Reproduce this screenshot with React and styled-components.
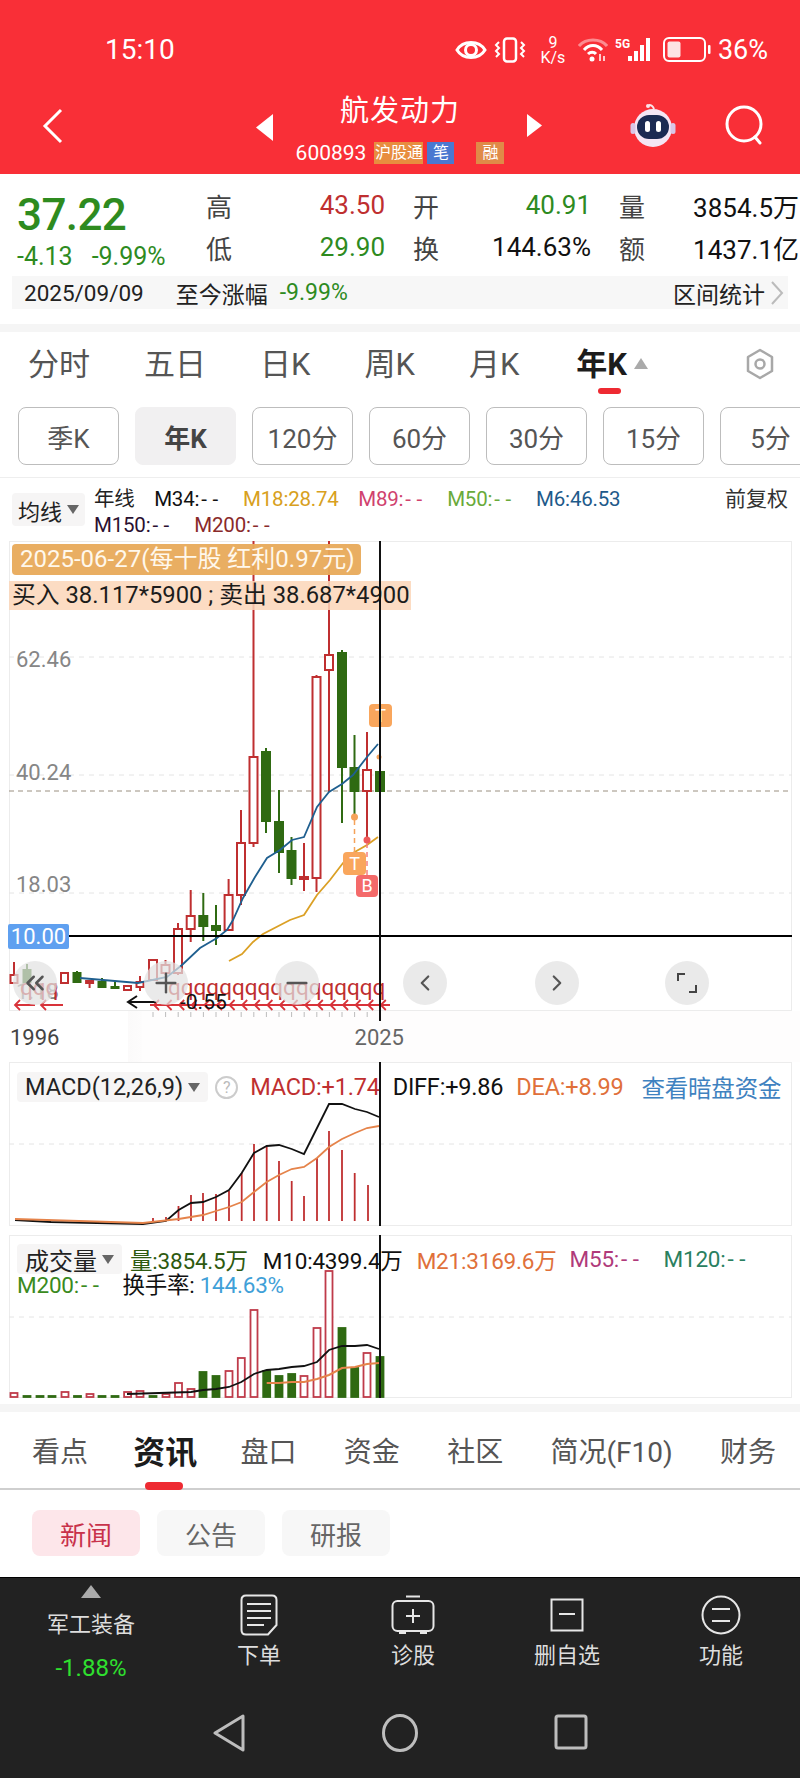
import React from 'react';
import styled, { createGlobalStyle } from 'styled-components';
import { ChevronLeft, ChevronRight, ChevronsLeft, Plus, Minus } from 'lucide-react';

const FONT = `Roboto, "Noto Sans CJK SC", sans-serif`;
const RED = '#bf2f30';
const GREEN = '#2f6a12';

const GlobalStyle = createGlobalStyle`
  html, body { margin: 0; padding: 0; background: #fff; }
  body { font-family: ${FONT}; color: #111; }
  * { box-sizing: border-box; }
`;

const Page = styled.div`
  width: 800px;
  height: 1778px;
  overflow: hidden;
  background: #fff;
`;

/* ---------- red header ---------- */
const Header = styled.header`
  height: 174px;
  background: #f92f37;
  color: #fff;
`;
const StatusBar = styled.div`
  height: 95px;
  padding: 4px 32px 0 105px;
  display: flex;
  align-items: center;
  font-size: 28px;
`;
const StatusIcons = styled.div`
  margin-left: auto;
  display: flex;
  align-items: center;
  gap: ${p => p.$gap || 0}px;
`;
const Speed = styled.div`
  width: 30px;
  margin: 0 10px 0 12px;
  font-size: 16px;
  line-height: 15px;
  text-align: center;
`;
const BatteryPct = styled.span`
  font-size: 27px;
  margin-left: 7px;
`;
const NavRow = styled.div`
  display: grid;
  grid-template-columns: 256px 17px 1fr 15px 258px;
  align-items: start;
`;
const BackCell = styled.div`
  padding: 13px 0 0 42px;
`;
const ArrowCell = styled.div`
  padding-top: 19px;
  display: flex;
`;
const TitleCell = styled.div`
  display: flex;
  flex-direction: column;
  align-items: center;
`;
const Title = styled.div`
  font-size: 29px;
  line-height: 32px;
  letter-spacing: 1px;
`;
const CodeRow = styled.div`
  margin-top: 14px;
  display: flex;
  align-items: center;
  font-size: 21px;
  line-height: 24px;
`;
const Badge = styled.span`
  height: 22px;
  width: ${p => p.$w}px;
  margin-left: ${p => p.$gap}px;
  background: ${p => p.$bg};
  color: #fff;
  font-size: 16px;
  line-height: 22px;
  text-align: center;
  white-space: nowrap;
`;
const RightCell = styled.div`
  padding: 8px 0 0 88px;
  display: flex;
  gap: 49px;
  align-items: center;
`;

/* ---------- quote ---------- */
const Quote = styled.section`
  height: 150px;
  padding-top: 12px;
`;
const QuoteTop = styled.div`
  display: flex;
  height: 84px;
`;
const PriceCol = styled.div`
  width: 206px;
  padding: 3px 0 0 17px;
`;
const Price = styled.div`
  font-size: 44px;
  line-height: 52px;
  font-weight: 500;
  color: #2e8b1f;
  letter-spacing: -0.6px;
`;
const Change = styled.div`
  font-size: 25px;
  line-height: 32px;
  color: #2e8b1f;
  display: flex;
  gap: 19px;
`;
const StatGrid = styled.div`
  display: grid;
  grid-template-columns: 179px 178px 180px;
  grid-auto-rows: 42px;
  column-gap: 28px;
  margin-top: -2px;
`;
const Stat = styled.div`
  display: flex;
  justify-content: space-between;
  align-items: center;
  font-size: 26px;
  span:first-child { color: #444; }
  span:last-child { color: ${p => p.$c || '#111'}; }
`;
const RangeBar = styled.div`
  margin: 6px 12px 0;
  height: 33px;
  padding: 0 4px 0 12px;
  background: #f7f7f7;
  display: flex;
  align-items: center;
  font-size: 23px;
  color: #222;
`;
const RangeDate = styled.span`
  font-size: 22.5px;
`;
const RangeLabel = styled.span`
  margin-left: 32px;
`;
const RangePct = styled.span`
  margin-left: 12px;
  color: #2e8b1f;
`;
const RangeLink = styled.span`
  margin-left: auto;
  display: flex;
  align-items: center;
  gap: 5px;
`;
const Sep = styled.div`
  height: ${p => p.$h || 8}px;
  background: ${p => p.$c || '#f5f5f5'};
`;

/* ---------- period tabs ---------- */
const PeriodTabs = styled.nav`
  display: flex;
  gap: 54px;
  padding: 13px 24px 0 28px;
  height: 53px;
  align-items: flex-start;
  position: relative;
`;
const PeriodTab = styled.span`
  position: relative;
  font-size: 31px;
  line-height: 40px;
  margin-left: ${p => (p.$active ? 3 : 0)}px;
  color: ${p => (p.$active ? '#1c1c1c' : '#555')};
  font-weight: ${p => (p.$active ? 700 : 400)};
`;
const SortMark = styled.span`
  position: absolute;
  left: 58px;
  top: 13px;
  width: 0;
  height: 0;
  border-left: 7px solid transparent;
  border-right: 7px solid transparent;
  border-bottom: 11px solid #aaa;
`;
const Underline = styled.span`
  position: absolute;
  left: ${p => p.$left}px;
  top: ${p => p.$top}px;
  width: ${p => p.$w}px;
  height: ${p => p.$h}px;
  border-radius: 4px;
  background: #ee2a32;
`;
const SettingsSlot = styled.span`
  position: absolute;
  right: 24px;
  top: 16px;
`;
const Pills = styled.div`
  margin-top: 22px;
  padding-left: 18px;
  display: flex;
  gap: 16px;
  height: 71px;
  overflow: hidden;
  border-bottom: 1px solid #eee;
`;
const Pill = styled.div`
  flex: 0 0 101px;
  height: 58px;
  border-radius: 8px;
  border: 1px solid ${p => (p.$active ? '#f1f0f1' : '#bdbdbd')};
  background: ${p => (p.$active ? '#f1f0f1' : '#fff')};
  color: ${p => (p.$active ? '#444' : '#555')};
  font-weight: ${p => (p.$active ? 700 : 400)};
  font-size: 26px;
  display: flex;
  align-items: center;
  justify-content: center;
`;

/* ---------- main chart ---------- */
const Legend = styled.div`
  height: 63px;
  padding: 8px 12px 0 12px;
  display: flex;
  align-items: flex-start;
  font-size: 20.5px;
`;
const Chip = styled.div`
  flex: none;
  height: ${p => p.$h}px;
  margin-top: ${p => p.$top || 0}px;
  padding: 0 ${p => p.$pad || 8}px;
  border-radius: 4px;
  background: #f6f5f5;
  display: flex;
  align-items: center;
  gap: 5px;
  color: #222;
  font-size: ${p => p.$fs}px;
`;
const Caret = styled.span`
  width: 0;
  height: 0;
  border-left: 6px solid transparent;
  border-right: 6px solid transparent;
  border-top: 9px solid #666;
`;
const LegendRows = styled.div`
  margin-left: 9px;
  flex: 1;
`;
const LegendRow = styled.div`
  display: flex;
  gap: 19.5px;
  line-height: 26px;
`;
const Tint = styled.span`
  color: ${p => p.$c};
  white-space: nowrap;
  letter-spacing: -0.2px;
`;
const Dashes = styled.span`
  letter-spacing: 5.5px;
  margin-left: 2px;
`;
const LegendEnd = styled.span`
  margin-left: auto;
  color: #333;
  font-size: 21px;
`;
const Frame = styled.div`
  position: relative;
  margin: 0 8px 0 9px;
  height: ${p => p.$h}px;
  border: 1px solid #ececec;
`;
const Plot = styled.svg`
  position: absolute;
  left: -10px;
  top: -1px;
  overflow: visible;
`;
const Crosshair = styled.div`
  position: absolute;
  left: 369px;
  top: -1px;
  width: 2px;
  height: ${p => p.$h}px;
  background: #111;
  z-index: 3;
`;
const Tag = styled.div`
  position: absolute;
  left: ${p => p.$x - 10}px;
  top: ${p => p.$y - 542}px;
  white-space: nowrap;
  z-index: ${p => p.$z || 1};
`;
const GoldBanner = styled(Tag)`
  width: 349px;
  height: 31px;
  border-radius: 4px;
  background: rgba(232, 170, 90, 0.95);
  color: #fff8ec;
  font-size: 24px;
  line-height: 31px;
  padding-left: 8px;
`;
const TradeBanner = styled(Tag)`
  width: 402px;
  height: 29px;
  background: rgba(251, 214, 184, 0.85);
  color: #1c1c1c;
  font-size: 23.8px;
  line-height: 29px;
  padding-left: 3px;
`;
const PriceLabel = styled(Tag)`
  color: #868686;
  font-size: 22px;
  line-height: 26px;
`;
const CurrentBox = styled(Tag)`
  width: 61px;
  height: 25px;
  border-radius: 2px;
  background: #5fa0f0;
  color: #fff;
  font-size: 22px;
  line-height: 25px;
  text-align: center;
`;
const GlitchText = styled(Tag)`
  color: ${RED};
  font-size: 22.5px;
  line-height: 26px;
`;
const PlainText = styled(Tag)`
  color: #111;
  font-size: 21px;
  line-height: 26px;
`;
const MarkerBox = styled(Tag)`
  width: ${p => p.$w}px;
  height: ${p => p.$w}px;
  border-radius: 4px;
  background: ${p => p.$bg};
  color: #fff;
  font-size: 18px;
  line-height: ${p => p.$w}px;
  text-align: center;
`;
const RoundBtn = styled(Tag)`
  width: 44px;
  height: 44px;
  border-radius: 50%;
  background: rgba(226, 226, 226, 0.72);
  color: #555;
  display: flex;
  align-items: center;
  justify-content: center;
`;
const AxisRow = styled.div`
  height: 51px;
  padding: 13px 396px 0 10px;
  display: flex;
  justify-content: space-between;
  font-size: 22px;
  line-height: 28px;
  color: #444;
  background: linear-gradient(90deg, #fff 128px, #fbfafa 128px, #fdfcfc 142px, #fefdfd 142px);
  span:last-child { color: #666; }
`;

/* ---------- macd + volume ---------- */
const PanelHead = styled.div`
  position: relative;
  z-index: 1;
  display: flex;
  align-items: center;
  font-size: 23.5px;
  padding: 7px 0 0 7px;
`;
const HelpMark = styled.span`
  width: 23px;
  height: 23px;
  margin-left: 7px;
  border-radius: 50%;
  border: 2px solid #ccc;
  color: #bbb;
  font-size: 16px;
  line-height: 19px;
  text-align: center;
`;
const HeadText = styled(Tint)`
  margin-left: ${p => p.$gap}px;
`;
const VolumeHead = styled.div`
  position: relative;
  z-index: 1;
  display: flex;
  flex-wrap: wrap;
  align-items: center;
  font-size: 22.5px;
  padding: 7px 0 0 7px;
`;
const Break = styled.div`
  flex-basis: 100%;
  height: 0;
`;
const SecondLine = styled.div`
  display: flex;
  line-height: 24px;
  margin-top: -2px;
`;
const PanelGap = styled.div`
  height: 9px;
`;

/* ---------- info tabs ---------- */
const InfoTabs = styled.nav`
  position: relative;
  height: 78px;
  padding: 0 24px 0 32px;
  display: flex;
  align-items: center;
  justify-content: space-between;
  border-bottom: 2px solid #cfcfcf;
`;
const InfoTab = styled.span`
  font-weight: ${p => (p.$active ? 700 : 400)};
  font-size: ${p => (p.$active ? 32 : 28)}px;
  color: ${p => (p.$active ? '#1c1c1c' : '#555')};
  margin: ${p => (p.$active ? '0 -4px 0 -2px' : 0)};
`;
const SubTabs = styled.div`
  height: 87px;
  padding: 20px 0 0 32px;
  display: flex;
  gap: 17px;
`;
const SubTab = styled.div`
  width: 108px;
  height: 46px;
  border-radius: 8px;
  background: ${p => (p.$active ? '#fde6ea' : '#f7f7f7')};
  color: ${p => (p.$active ? '#c8324a' : '#666')};
  font-size: 26px;
  display: flex;
  align-items: center;
  justify-content: center;
`;

/* ---------- dark footer ---------- */
const Footer = styled.footer`
  height: 201px;
  background: #222;
  border-top: 1px solid #000;
  color: #ddd;
`;
const Actions = styled.div`
  display: grid;
  grid-template-columns: 182px repeat(4, 154px);
  height: 124px;
`;
const SectorCell = styled.div`
  padding-top: 7px;
  display: flex;
  flex-direction: column;
  align-items: center;
`;
const UpMark = styled.span`
  width: 0;
  height: 0;
  border-left: 10px solid transparent;
  border-right: 10px solid transparent;
  border-bottom: 13px solid #aaa;
`;
const FooterLabel = styled.div`
  font-size: 22px;
  line-height: 28px;
  margin-top: ${p => p.$top}px;
`;
const SectorPct = styled.div`
  font-size: 24px;
  line-height: 28px;
  margin-top: 15px;
  color: #2fe02f;
`;
const ActionCell = styled.div`
  padding-top: 16px;
  display: flex;
  flex-direction: column;
  align-items: center;
`;
const IconSlot = styled.div`
  height: 42px;
  display: flex;
  align-items: center;
`;
const SystemNav = styled.div`
  display: grid;
  grid-template-columns: repeat(3, 171px);
  justify-content: center;
  justify-items: center;
  padding-top: 12px;
`;

/* ---------- data ---------- */
const CANDLES = [
  // x, up?, top, bottom, wickTop, wickBottom
  [380, 0, 772, 791, 772, 791],
  [367, 1, 770, 791, 732, 837],
  [354.5, 0, 768, 791, 735, 817],
  [342, 0, 653, 767, 650, 823],
  [329, 1, 655, 670, 541, 792],
  [316.5, 1, 677, 878, 675, 892],
  [304, 1, 877, 879, 843, 891],
  [291.5, 0, 851, 878, 837, 885],
  [279, 0, 822, 852, 790, 873],
  [266, 0, 752, 821, 748, 833],
  [253.5, 1, 757, 843, 541, 847],
  [241, 1, 843, 895, 810, 905],
  [228.6, 1, 895, 930, 879, 930],
  [216, 0, 926, 930, 905, 945],
  [203.3, 0, 916, 926, 893, 941],
  [190.7, 1, 916, 929, 890, 942],
  [178, 1, 929, 973, 923, 975],
  [165.5, 1, 965, 973, 960, 975],
  [153, 1, 960, 980, 960, 980],
  [140, 1, 982, 987, 976, 991],
  [127.5, 1, 986, 990, 986, 990],
  [115, 0, 987, 988, 982, 988],
  [102, 0, 982, 987, 978, 987],
  [89.6, 1, 981, 983, 981, 988],
  [77, 0, 973, 982, 971, 983],
  [64.5, 1, 973, 983, 973, 983],
  [27, 0, 970, 982, 964, 983],
  [14, 1, 975, 983, 962, 983],
];
const MA6 = '80,978 138,983 167,977 182,965 200,948 217,938 227,930 233,920 243,898 255,877 267,858 280,850 292,840 304,837 317,807 329,792 342,784 353,775 367,757 378,744';
const MA18 = '229,961 242,954 253,942 263,934 290,920 304,915 317,895 330,880 343,863 353,853 367,845 378,837';

const hist = [[368, 1185], [354.7, 1173], [342, 1150], [329, 1131], [317, 1158], [304, 1196], [291.7, 1181], [279, 1161], [266.7, 1147], [254, 1144], [241.7, 1173], [229, 1191], [216, 1194], [203, 1193], [191, 1195], [178.5, 1206], [166, 1217], [153, 1218]];
const DIFF = '15,1220 51,1222 143,1224 166,1221 178.6,1210 191,1203 203,1202 216,1197 229,1190 241.7,1173 254,1153 266.7,1146 279,1145 291.7,1149 304,1154 317,1128 329,1104 342,1104 355,1109 367,1112 379,1117';
const DEA = '15,1219 143,1223 178.6,1219 203,1215 216,1211 229,1207 241.7,1202 254,1192 266.7,1182 279,1175 291.7,1169 304,1167 317,1158 329,1147 342,1139 355,1133 367,1128 379,1126';

const vols = [[380, 0, 1357], [367, 1, 1353], [354.7, 0, 1368], [342, 0, 1328], [329, 1, 1271], [317, 1, 1328], [304, 1, 1376], [291.7, 0, 1374], [279, 0, 1376], [266.7, 0, 1371], [254, 1, 1310], [241.3, 1, 1358], [229, 1, 1371], [216, 0, 1376], [203, 0, 1372], [191, 1, 1389], [178.5, 1, 1383], [166, 1, 1394], [153, 0, 1396], [140, 1, 1391], [127.6, 1, 1392], [115, 0, 1396], [102, 0, 1396], [90, 1, 1394], [77.5, 0, 1396], [65, 1, 1392], [52, 0, 1396], [40, 0, 1396], [27, 0, 1396], [14, 1, 1393]];
const VOL10 = '127,1394 191,1392 203,1390 216,1389 229,1387 241.3,1382 254,1374 266.7,1370 279,1369 291.7,1367 304,1366 317,1362 329,1350 342,1346 355,1346 367,1345 379,1349';
const VOL21 = '266.7,1383 279,1383 291.7,1382 304,1382 317,1379 329,1375 342,1368 355,1367 367,1364 379,1363';

/* ---------- drawings ---------- */
const Eye = () => (
  <svg width="32" height="22" viewBox="0 0 32 22" fill="none" stroke="#fff" strokeWidth="3">
    <path d="M2 11C8 1 24 1 30 11C24 21 8 21 2 11Z" />
    <circle cx="16" cy="11" r="5.5" />
  </svg>
);
const Vibrate = () => (
  <svg width="32" height="26" viewBox="0 0 32 26" fill="none" stroke="#fff" strokeWidth="2">
    <rect x="10" y="1.5" width="12" height="23" rx="3" strokeWidth="2.5" />
    <path d="M5 5l-3 3 3 3-3 3 3 3-3 3M27 5l3 3-3 3 3 3-3 3 3 3" />
  </svg>
);
const Wifi = () => (
  <svg width="30" height="24" viewBox="0 0 30 24" fill="none" stroke="#fff" strokeWidth="3">
    <path d="M1 8C8 0 22 0 29 8" opacity="0.45" />
    <path d="M6 12C11 6 19 6 24 12" />
    <path d="M10 16C12.500 13.500 16 13.500 18 16" />
    <circle cx="14" cy="21" r="2.500" fill="#fff" stroke="none" />
    <path d="M22 16v7M26 18v5" strokeWidth="1.500" />
  </svg>
);
const Signal = () => (
  <svg width="39" height="25" viewBox="0 0 39 25">
    <text x="0" y="11" fill="#fff" fontSize="12" fontWeight="700" fontFamily="Roboto, sans-serif">5G</text>
    <g fill="#fff">
      <rect x="13" y="19" width="4" height="5" />
      <rect x="19" y="14" width="4" height="10" />
      <rect x="25" y="8" width="4" height="16" />
      <rect x="31" y="1" width="4" height="23" />
    </g>
  </svg>
);
const Battery = () => (
  <svg width="48" height="25" viewBox="0 0 48 25" fill="none">
    <rect x="1" y="1" width="41" height="23" rx="5" stroke="#fff" strokeWidth="2" />
    <rect x="4.500" y="4.500" width="13" height="16" rx="2" fill="#fde3e4" />
    <rect x="45" y="8" width="2.500" height="9" rx="1" fill="#fff" />
  </svg>
);
const Robot = () => (
  <svg width="46" height="44" viewBox="0 0 46 44">
    <path d="M24 6C23 3 21 2 19 2" fill="none" stroke="#fbe4ea" strokeWidth="2" />
    <circle cx="18" cy="3" r="2" fill="#fbe4ea" />
    <circle cx="23" cy="25" r="19" fill="#f4e6f4" />
    <rect x="0.500" y="20" width="5" height="11" rx="2.500" fill="#d9c6e6" />
    <rect x="40.500" y="20" width="5" height="11" rx="2.500" fill="#d9c6e6" />
    <rect x="7" y="12" width="32" height="24" rx="12" fill="#1b2a52" />
    <rect x="15" y="18" width="5" height="11" rx="2.500" fill="#fff" />
    <rect x="26" y="18" width="5" height="11" rx="2.500" fill="#fff" />
  </svg>
);
const Search = () => (
  <svg width="40" height="40" viewBox="0 0 40 40" fill="none" stroke="#fff" strokeWidth="3">
    <circle cx="19" cy="19" r="17" />
    <path d="M30 32l5 6" strokeLinecap="round" />
  </svg>
);
const Gear = () => (
  <svg width="32" height="32" viewBox="0 0 32 32" fill="none" stroke="#a8a8a8" strokeWidth="2.500">
    <path d="M16 2L28 9V23L16 30L4 23V9Z" strokeLinejoin="round" />
    <circle cx="16" cy="16" r="4.500" />
  </svg>
);

const Candle = ({ x, up, top, bottom, wickTop, wickBottom }) => {
  const color = up ? RED : GREEN;
  const w = x < 150 ? 7 : 8;
  return (
    <g>
      <line x1={x} x2={x} y1={wickTop} y2={wickBottom} stroke={color} strokeWidth="2" />
      <rect
        x={x - w / 2}
        y={top}
        width={w}
        height={Math.max(bottom - top, 1)}
        fill={up ? '#fff' : color}
        stroke={color}
        strokeWidth="2"
      />
    </g>
  );
};

const arrowXs = Array.from({ length: 19 }, (_, i) => 155 + i * 12.6);

const MainPlot = () => (
  <Plot width="800" height="480" viewBox="0 541 800 480">
    <g stroke="#e4e4e4" strokeDasharray="5 5" strokeWidth="1">
      <line x1="9" x2="792" y1="657" y2="657" />
      <line x1="9" x2="792" y1="775" y2="775" />
      <line x1="9" x2="792" y1="893" y2="893" />
    </g>
    <line x1="9" x2="792" y1="791" y2="791" stroke="#9a8f80" strokeDasharray="5 4" strokeWidth="1" />
    {CANDLES.map(([x, up, top, bottom, wickTop, wickBottom]) => (
      <Candle key={x} x={x} up={up} top={top} bottom={bottom} wickTop={wickTop} wickBottom={wickBottom} />
    ))}
    <polyline points={MA6} fill="none" stroke="#1f5f8f" strokeWidth="1.800" />
    <polyline points={MA18} fill="none" stroke="#dba025" strokeWidth="1.800" />
    <line x1="69" x2="792" y1="936" y2="936" stroke="#000" strokeWidth="2" />
    <line x1="354.500" x2="354.500" y1="820" y2="852" stroke="#f5a25a" strokeWidth="1.500" strokeDasharray="5 4" />
    <circle cx="354.500" cy="817" r="3.500" fill="#f5a25a" />
    <line x1="367" x2="367" y1="843" y2="875" stroke="#f48080" strokeWidth="1.500" strokeDasharray="5 4" />
    <circle cx="367" cy="840" r="3.500" fill="#ee5a5a" />
    <circle cx="379" cy="757" r="2.500" fill="#f5a25a" />
    <g fill="none" stroke="#d8333a" strokeWidth="1.800">
      <line x1="150" x2="390" y1="1005" y2="1005" />
      {arrowXs.map(x => <path key={x} d={`M${x + 4} 1000l-5 5 5 5`} />)}
      <path d="M15 1005h20M20 1000l-5 5 5 5M41 1005h22M46 1000l-5 5 5 5" />
    </g>
    <path d="M128 1002h28M137 996l-9 6 9 6" fill="none" stroke="#111" strokeWidth="2" />
    <g stroke="#bcbcbc" strokeWidth="1">
      {arrowXs.map(x => <line key={x} x1={x - 2} x2={x - 2} y1="1012" y2="1017" />)}
    </g>
  </Plot>
);

const MacdPlot = () => (
  <Plot width="800" height="166" viewBox="0 1062 800 166">
    <line x1="9" x2="792" y1="1144" y2="1144" stroke="#e4e4e4" strokeDasharray="5 5" />
    {hist.map(([x, top]) => (
      <line key={x} x1={x} x2={x} y1={top} y2="1221" stroke={RED} strokeWidth="1.800" />
    ))}
    <polyline points={DIFF} fill="none" stroke="#111" strokeWidth="1.800" />
    <polyline points={DEA} fill="none" stroke="#e5834a" strokeWidth="1.800" />
  </Plot>
);

const VolumePlot = () => (
  <Plot width="800" height="166" viewBox="0 1235 800 166">
    <line x1="9" x2="792" y1="1317" y2="1317" stroke="#e4e4e4" strokeDasharray="5 5" />
    {vols.map(([x, up, top]) => (
      <rect
        key={x}
        x={x - 3.500}
        y={top}
        width="7"
        height={1397 - top}
        fill={up ? '#fff' : GREEN}
        stroke={up ? '#bf3b4a' : GREEN}
        strokeWidth="1.800"
      />
    ))}
    <polyline points={VOL10} fill="none" stroke="#111" strokeWidth="1.800" />
    <polyline points={VOL21} fill="none" stroke="#e5834a" strokeWidth="2" />
  </Plot>
);

const DocIcon = () => (
  <svg width="38" height="42" viewBox="0 0 38 42" fill="none" stroke="#e6e6e6" strokeWidth="2">
    <path d="M6 1.500H32Q36.500 1.500 36.500 6V31L28 40.500H6Q1.500 40.500 1.500 36V6Q1.500 1.500 6 1.500Z" />
    <path d="M7 10H31M7 17H31M7 24H31M7 31H24" />
  </svg>
);
const SafeIcon = () => (
  <svg width="44" height="40" viewBox="0 0 44 40" fill="none" stroke="#e6e6e6" strokeWidth="2">
    <path d="M15 1.500H29" />
    <rect x="1.500" y="6" width="41" height="30" rx="5" />
    <path d="M22 14V28M15 21H29" />
    <path d="M8 37.500H15M29 37.500H36" strokeWidth="3" />
  </svg>
);
const MinusBoxIcon = () => (
  <svg width="34" height="34" viewBox="0 0 34 34" fill="none" stroke="#e6e6e6" strokeWidth="2">
    <rect x="1.500" y="1.500" width="31" height="31" />
    <path d="M9 16H25" />
  </svg>
);
const MenuIcon = () => (
  <svg width="40" height="40" viewBox="0 0 40 40" fill="none" stroke="#e6e6e6" strokeWidth="2">
    <circle cx="20" cy="20" r="18.500" />
    <path d="M11 14H29M11 26H29" />
  </svg>
);

const Corners = () => (
  <svg width="24" height="24" viewBox="0 0 24 24" fill="none" stroke="#444" strokeWidth="2">
    <path d="M3 10V3H10M14 21H21V14" />
  </svg>
);

export default function App() {
  return (
    <Page>
      <GlobalStyle />
      <Header>
        <StatusBar>
          <span>15:10</span>
          <StatusIcons>
            <StatusIcons $gap={7}><Eye /><Vibrate /></StatusIcons>
            <Speed>9<br />K/s</Speed>
            <StatusIcons $gap={7}><Wifi /><Signal /></StatusIcons>
            <StatusIcons $gap={9}><span /><Battery /></StatusIcons>
            <BatteryPct>36%</BatteryPct>
          </StatusIcons>
        </StatusBar>
        <NavRow>
          <BackCell>
            <svg width="22" height="36" viewBox="0 0 22 36" fill="none" stroke="#fff" strokeWidth="3">
              <path d="M19 2L3 18L19 34" />
            </svg>
          </BackCell>
          <ArrowCell>
            <svg width="17" height="27" viewBox="0 0 17 27"><path d="M17 0V27L0 13.500Z" fill="#fff" /></svg>
          </ArrowCell>
          <TitleCell>
            <Title>航发动力</Title>
            <CodeRow>
              600893
              <Badge $w={49} $gap={8} $bg="#e88d3f">沪股通</Badge>
              <Badge $w={27} $gap={4} $bg="#4a78d0">笔</Badge>
              <Badge $w={28} $gap={22} $bg="#e08a48">融</Badge>
            </CodeRow>
          </TitleCell>
          <ArrowCell>
            <svg width="15" height="23" viewBox="0 0 15 23"><path d="M0 0V23L15 11.500Z" fill="#fff" /></svg>
          </ArrowCell>
          <RightCell>
            <Robot />
            <Search />
          </RightCell>
        </NavRow>
      </Header>

      <Quote>
        <QuoteTop>
          <PriceCol>
            <Price>37.22</Price>
            <Change><span>-4.13</span><span>-9.99%</span></Change>
          </PriceCol>
          <StatGrid>
            <Stat $c={RED}><span>高</span><span>43.50</span></Stat>
            <Stat $c="#2e8b1f"><span>开</span><span>40.91</span></Stat>
            <Stat><span>量</span><span>3854.5万</span></Stat>
            <Stat $c="#2e8b1f"><span>低</span><span>29.90</span></Stat>
            <Stat><span>换</span><span>144.63%</span></Stat>
            <Stat><span>额</span><span>1437.1亿</span></Stat>
          </StatGrid>
        </QuoteTop>
        <RangeBar>
          <RangeDate>2025/09/09</RangeDate>
          <RangeLabel>至今涨幅</RangeLabel>
          <RangePct>-9.99%</RangePct>
          <RangeLink>
            区间统计
            <svg width="14" height="26" viewBox="0 0 14 26" fill="none" stroke="#bbb" strokeWidth="2"><path d="M2 2L12 13L2 24" /></svg>
          </RangeLink>
        </RangeBar>
      </Quote>
      <Sep />

      <PeriodTabs>
        <PeriodTab>分时</PeriodTab>
        <PeriodTab>五日</PeriodTab>
        <PeriodTab>日K</PeriodTab>
        <PeriodTab>周K</PeriodTab>
        <PeriodTab>月K</PeriodTab>
        <PeriodTab $active>
          年K
          <SortMark />
          <Underline $left={22} $top={43} $w={23} $h={6} />
        </PeriodTab>
        <SettingsSlot><Gear /></SettingsSlot>
      </PeriodTabs>
      <Pills>
        <Pill>季K</Pill>
        <Pill $active>年K</Pill>
        <Pill>120分</Pill>
        <Pill>60分</Pill>
        <Pill>30分</Pill>
        <Pill>15分</Pill>
        <Pill>5分</Pill>
      </Pills>

      <Legend>
        <Chip $h={33} $top={7} $fs={22} $pad={6}>均线<Caret /></Chip>
        <LegendRows>
          <LegendRow>
            <Tint $c="#222">年线</Tint>
            <Tint $c="#111">M34:<Dashes>--</Dashes></Tint>
            <Tint $c="#d8a020">M18:28.74</Tint>
            <Tint $c="#d0426e">M89:<Dashes>--</Dashes></Tint>
            <Tint $c="#6aaa3a">M50:<Dashes>--</Dashes></Tint>
            <Tint $c="#1e5a8a">M6:46.53</Tint>
            <LegendEnd>前复权</LegendEnd>
          </LegendRow>
          <LegendRow>
            <Tint $c="#2a1030">M150:<Dashes>--</Dashes></Tint>
            <Tint $c="#8a2a2a">M200:<Dashes>--</Dashes></Tint>
          </LegendRow>
        </LegendRows>
      </Legend>

      <Frame $h={470}>
        <MainPlot />
        <PriceLabel $x={16} $y={647}>62.46</PriceLabel>
        <PriceLabel $x={16} $y={760}>40.24</PriceLabel>
        <PriceLabel $x={16} $y={872}>18.03</PriceLabel>
        <PriceLabel $x={16} $y={979}>1.18</PriceLabel>
        <GlitchText $x={20} $y={974}>qqq</GlitchText>
        <GlitchText $x={168} $y={974}>qqqqqqqqqqqqqqqqq</GlitchText>
        <PlainText $x={180} $y={989}>-0.55</PlainText>
        <GoldBanner $x={12} $y={544}>2025-06-27(每十股 红利0.97元)</GoldBanner>
        <TradeBanner $x={9} $y={581}>买入 38.117*5900 ; 卖出 38.687*4900</TradeBanner>
        <CurrentBox $x={8} $y={924}>10.00</CurrentBox>
        <MarkerBox $x={369} $y={704} $w={23} $bg="#f9a65c">T</MarkerBox>
        <MarkerBox $x={343} $y={852} $w={23} $bg="#f9a65c">T</MarkerBox>
        <MarkerBox $x={356} $y={875} $w={22} $bg="#f46a6a">B</MarkerBox>
        <Crosshair $h={480} />
        <RoundBtn $x={13} $y={961} $z={4}><ChevronsLeft size={30} /></RoundBtn>
        <RoundBtn $x={144} $y={961} $z={4}><Plus size={32} strokeWidth={1.800} /></RoundBtn>
        <RoundBtn $x={275} $y={961} $z={4}><Minus size={32} strokeWidth={1.800} /></RoundBtn>
        <RoundBtn $x={403} $y={961} $z={4}><ChevronLeft size={26} /></RoundBtn>
        <RoundBtn $x={535} $y={961} $z={4}><ChevronRight size={26} /></RoundBtn>
        <RoundBtn $x={665} $y={961} $z={4}><Corners /></RoundBtn>
      </Frame>
      <AxisRow>
        <span>1996</span>
        <span>2025</span>
      </AxisRow>

      <Frame $h={164}>
        <MacdPlot />
        <PanelHead>
          <Chip $h={30} $fs={23.5} $pad={8}>MACD(12,26,9)<Caret /></Chip>
          <HelpMark>?</HelpMark>
          <HeadText $gap={12} $c={RED}>MACD:+1.74</HeadText>
          <HeadText $gap={13} $c="#111">DIFF:+9.86</HeadText>
          <HeadText $gap={13} $c="#e0703a">DEA:+8.99</HeadText>
          <HeadText $gap={18} $c="#3f82c0">查看暗盘资金</HeadText>
        </PanelHead>
        <Crosshair $h={164} />
      </Frame>
      <PanelGap />
      <Frame $h={163}>
        <VolumePlot />
        <VolumeHead>
          <Chip $h={30} $fs={24} $pad={8}>成交量<Caret /></Chip>
          <HeadText $gap={8} $c="#2e5a10">量:3854.5万</HeadText>
          <HeadText $gap={15} $c="#111">M10:4399.4万</HeadText>
          <HeadText $gap={14} $c="#e0703a">M21:3169.6万</HeadText>
          <HeadText $gap={13} $c="#b03a7a">M55:<Dashes>--</Dashes></HeadText>
          <HeadText $gap={19} $c="#2a8060">M120:<Dashes>--</Dashes></HeadText>
          <Break />
          <SecondLine>
            <Tint $c="#3a8a20">M200:<Dashes>--</Dashes></Tint>
            <HeadText $gap={18} $c="#111">换手率:</HeadText>
            <HeadText $gap={5} $c="#3fa0d8">144.63%</HeadText>
          </SecondLine>
        </VolumeHead>
        <Crosshair $h={163} />
      </Frame>
      <Sep $c="#fff" $h={6} />
      <Sep />

      <InfoTabs>
        <InfoTab>看点</InfoTab>
        <InfoTab $active>资讯</InfoTab>
        <InfoTab>盘口</InfoTab>
        <InfoTab>资金</InfoTab>
        <InfoTab>社区</InfoTab>
        <InfoTab>简况(F10)</InfoTab>
        <InfoTab>财务</InfoTab>
        <Underline $left={145} $top={70} $w={38} $h={8} />
      </InfoTabs>
      <SubTabs>
        <SubTab $active>新闻</SubTab>
        <SubTab>公告</SubTab>
        <SubTab>研报</SubTab>
      </SubTabs>

      <Footer>
        <Actions>
          <SectorCell>
            <UpMark />
            <FooterLabel $top={13}>军工装备</FooterLabel>
            <SectorPct>-1.88%</SectorPct>
          </SectorCell>
          <ActionCell>
            <IconSlot><DocIcon /></IconSlot>
            <FooterLabel $top={6}>下单</FooterLabel>
          </ActionCell>
          <ActionCell>
            <IconSlot><SafeIcon /></IconSlot>
            <FooterLabel $top={6}>诊股</FooterLabel>
          </ActionCell>
          <ActionCell>
            <IconSlot><MinusBoxIcon /></IconSlot>
            <FooterLabel $top={6}>删自选</FooterLabel>
          </ActionCell>
          <ActionCell>
            <IconSlot><MenuIcon /></IconSlot>
            <FooterLabel $top={6}>功能</FooterLabel>
          </ActionCell>
        </Actions>
        <SystemNav>
          <svg width="32" height="38" viewBox="0 0 32 38" fill="none" stroke="#bdbdbd" strokeWidth="3" strokeLinejoin="round">
            <path d="M30 2V36L2 19Z" />
          </svg>
          <svg width="36" height="38" viewBox="0 0 36 38" fill="none" stroke="#bdbdbd" strokeWidth="3">
            <ellipse cx="18" cy="19" rx="16.500" ry="17.500" />
          </svg>
          <svg width="34" height="36" viewBox="0 0 34 36" fill="none" stroke="#bdbdbd" strokeWidth="3">
            <rect x="2" y="2" width="30" height="32" rx="2" />
          </svg>
        </SystemNav>
      </Footer>
    </Page>
  );
}
